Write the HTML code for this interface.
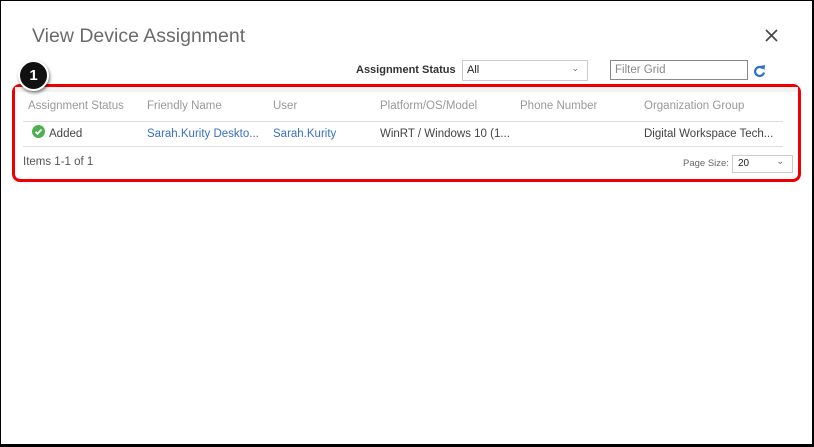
<!DOCTYPE html>
<html><head><meta charset="utf-8"><style>
*{margin:0;padding:0;box-sizing:border-box}
body{width:814px;height:447px;background:#000;position:relative;overflow:hidden;font-family:"Liberation Sans",sans-serif}
#w{position:absolute;left:1px;top:1px;width:811px;height:443px;background:#fff}
.a{position:absolute;white-space:nowrap}
.h{color:#999;font-size:11.5px;top:100px}
.c{font-size:11.5px;top:128px;color:#444}
.l{color:#3a6fc4}
</style></head><body><div id="w"></div>
<div class="a" style="left:32px;top:25px;font-size:19.5px;color:#6a6a6a">View Device Assignment</div>
<svg class="a" style="left:765px;top:29px" width="13" height="13"><path d="M1 1L12 12M12 1L1 12" stroke="#444" stroke-width="1.6"/></svg>
<div class="a" style="left:356px;top:64px;font-size:11px;color:#333;font-weight:bold">Assignment Status</div>
<div class="a" style="left:462px;top:60px;width:126px;height:21px;border:1px solid #ccc;font-size:11px;padding:3px 4px;color:#222">All<span style="position:absolute;right:8px;top:2px;font-size:9px;color:#666">⌄</span></div>
<div class="a" style="left:610px;top:60px;width:138px;height:20px;border:1px solid #888;font-size:11.5px;padding:3px 4px;color:#888">Filter Grid</div>
<svg class="a" style="left:753px;top:64px" width="13" height="14" viewBox="0 0 13 14"><path d="M10 4.5A4.5 4.5 0 1 0 11 8.5" fill="none" stroke="#2f6fd0" stroke-width="2.2"/><path d="M7 2L12 1L11.5 6Z" fill="#2f6fd0"/></svg>
<div class="a" style="left:12px;top:84px;width:789px;height:98px;border:3px solid #e00;border-radius:8px"></div>
<div class="a" style="left:15px;top:87px;width:783px;height:5px;background:#f3f3f3"></div>
<div class="a h" style="left:28px">Assignment Status</div>
<div class="a h" style="left:147px">Friendly Name</div>
<div class="a h" style="left:273px">User</div>
<div class="a h" style="left:380px">Platform/OS/Model</div>
<div class="a h" style="left:520px">Phone Number</div>
<div class="a h" style="left:644px">Organization Group</div>
<div class="a" style="left:23px;top:121px;width:760px;height:1px;background:#ddd"></div>
<svg class="a" style="left:32px;top:125px" width="13" height="13"><circle cx="6.5" cy="6.5" r="6.5" fill="#4caf50"/><path d="M3.5 6.8l2 2 4-4.3" stroke="#fff" stroke-width="1.8" fill="none"/></svg>
<div class="a c" style="left:49px">Added</div>
<div class="a c l" style="left:147px">Sarah.Kurity Deskto...</div>
<div class="a c l" style="left:273px">Sarah.Kurity</div>
<div class="a c" style="left:380px">WinRT / Windows 10 (1...</div>
<div class="a c" style="left:644px">Digital Workspace Tech...</div>
<div class="a" style="left:23px;top:146px;width:760px;height:1px;background:#ddd"></div>
<div class="a" style="left:23px;top:156px;font-size:11.5px;color:#555">Items 1-1 of 1</div>
<div class="a" style="left:683px;top:158px;font-size:9.5px;color:#666">Page Size:</div>
<div class="a" style="left:732px;top:155px;width:61px;height:18px;border:1px solid #ccc;font-size:10px;padding:2px 5px;color:#222">20<span style="position:absolute;right:8px;top:0;font-size:9px;color:#666">⌄</span></div>
<div class="a" style="left:18px;top:60px;width:31px;height:31px;border-radius:50%;background:#111;border:2px solid #fff;box-shadow:1px 2px 3px rgba(0,0,0,.5);color:#fff;font-weight:bold;font-size:15px;text-align:center;line-height:27px">1</div>
</body></html>
